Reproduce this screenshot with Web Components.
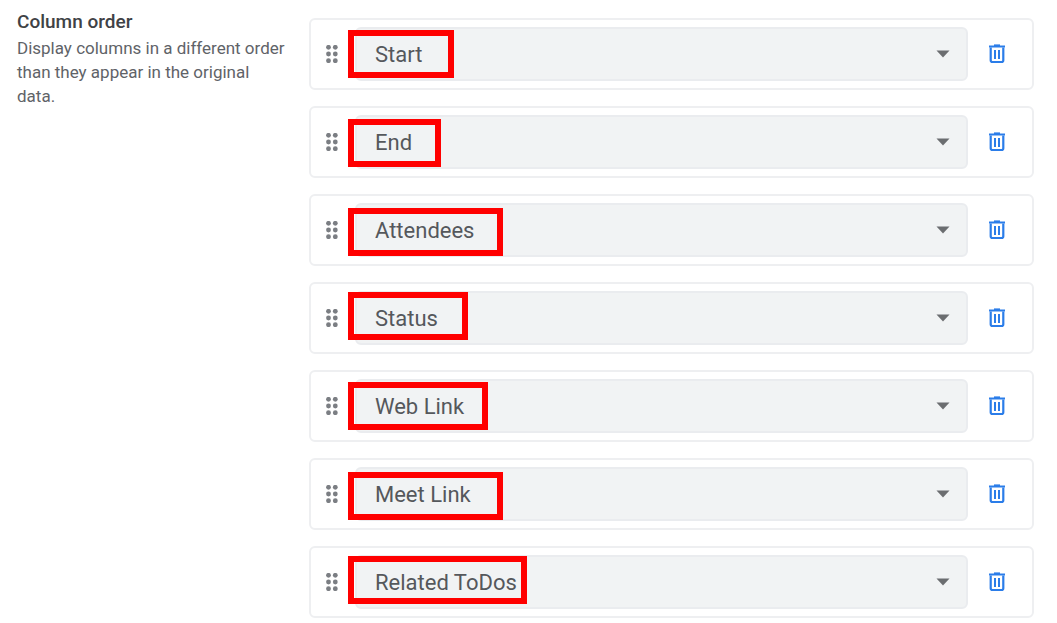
<!DOCTYPE html>
<html lang="en">
<head>
<meta charset="utf-8">
<meta name="viewport" content="width=device-width, initial-scale=1">
<title>Column order</title>
<style>
  body { margin: 0; background: #fff; color: #5f6368; font-family: Roboto, "Liberation Sans", sans-serif; }
</style>
</head>
<body>
<column-order-panel>
  <span slot="title">Column order</span>
  <span slot="description">Display columns in a different order than they appear in the original data.</span>
  <column-row value="Start"></column-row>
  <column-row value="End"></column-row>
  <column-row value="Attendees"></column-row>
  <column-row value="Status"></column-row>
  <column-row value="Web Link"></column-row>
  <column-row value="Meet Link"></column-row>
  <column-row value="Related ToDos"></column-row>
  <highlight-box slot="marks" top="12" width="106"></highlight-box>
  <highlight-box slot="marks" top="101" width="93"></highlight-box>
  <highlight-box slot="marks" top="190" width="155"></highlight-box>
  <highlight-box slot="marks" top="274" width="120"></highlight-box>
  <highlight-box slot="marks" top="364" width="140"></highlight-box>
  <highlight-box slot="marks" top="454" width="155"></highlight-box>
  <highlight-box slot="marks" top="538" width="179"></highlight-box>
</column-order-panel>

<script>
const COLUMNS = ["Start", "End", "Attendees", "Status", "Web Link", "Meet Link", "Related ToDos"];

class ColumnOrderPanel extends HTMLElement {
  constructor() {
    super();
    this.attachShadow({ mode: "open" }).innerHTML = `
      <style>
        :host { display: grid; grid-template-columns: 270px minmax(0, 1fr); column-gap: 22px; padding: 8px 23px 4px 17px; }
        h2 { margin: 0; font-size: 19px; line-height: 28px; font-weight: 500; color: #3f4246; }
        p { margin: 0; font-size: 17px; line-height: 24px; }
        .list { position: relative; display: flex; flex-direction: column; gap: 16px; margin-top: 10px; }
      </style>
      <header><h2><slot name="title"></slot></h2><p><slot name="description"></slot></p></header>
      <div class="list"><slot></slot><slot name="marks"></slot></div>`;
  }
}

class ColumnRow extends HTMLElement {
  constructor() {
    super();
    this.attachShadow({ mode: "open" }).innerHTML = `
      <style>
        :host { display: flex; align-items: center; box-sizing: border-box; height: 72px; padding: 0 23px 0 10px; border: 2px solid #eeeff1; border-radius: 6px; background: #fff; }
        button { display: flex; align-items: center; justify-content: center; border: 0; padding: 0; background: none; cursor: pointer; }
        .drag { width: 22px; height: 40px; margin-right: 12px; cursor: grab; }
        .field { display: grid; flex: 1; min-width: 0; align-items: center; }
        .field > * { grid-area: 1 / 1; }
        select { appearance: none; width: 100%; height: 54px; margin: 0; padding: 2px 48px 0 18px; border: 2px solid #eaecef; border-radius: 6px; background: #f1f3f4; color: #55585c; font-family: inherit; font-size: 22px; line-height: 26px; }
        .arrow { justify-self: end; margin-right: 18px; pointer-events: none; }
        .delete { width: 24px; height: 40px; margin-left: 17px; }
        svg { display: block; }
      </style>
      <button class="drag" type="button" aria-label="Reorder column">
        <svg width="12" height="18" viewBox="0 0 12 18" fill="#7b7e83">
          <circle cx="2.5" cy="2.3" r="2.4"/><circle cx="9.3" cy="2.3" r="2.4"/>
          <circle cx="2.5" cy="9" r="2.4"/><circle cx="9.3" cy="9" r="2.4"/>
          <circle cx="2.5" cy="15.7" r="2.4"/><circle cx="9.3" cy="15.7" r="2.4"/>
        </svg>
      </button>
      <div class="field">
        <select aria-label="Column"></select>
        <svg class="arrow" width="14" height="8" viewBox="0 0 14 8"><path d="M.5.5h13L7 7.5z" fill="#6b6d70"/></svg>
      </div>
      <button class="delete" type="button" aria-label="Delete column">
        <svg width="18" height="20" viewBox="0 0 18 20" fill="none" stroke="#2b7de9">
          <path d="M1 2.500h16" stroke-width="2"/><path d="M6 1.200h6" stroke-width="1.600"/>
          <path d="M2.700 3.500V16.300q0 1.700 1.700 1.700h9.200q1.700 0 1.700-1.700V3.500" stroke-width="2.200"/>
          <path d="M7 6v9M11 6v9" stroke-width="2"/>
        </svg>
      </button>`;
  }
  connectedCallback() {
    const select = this.shadowRoot.querySelector("select");
    const value = this.getAttribute("value");
    select.replaceChildren(...COLUMNS.map(name => new Option(name, name, name === value, name === value)));
  }
}

/* Hand-placed annotation frame drawn over the list. */
class HighlightBox extends HTMLElement {
  constructor() {
    super();
    this.attachShadow({ mode: "open" }).innerHTML = `
      <style>
        :host { position: absolute; left: 39px; box-sizing: border-box; height: 48px; border: 6px solid #f00; pointer-events: none; }
      </style>`;
  }
  connectedCallback() {
    this.style.top = this.getAttribute("top") + "px";
    this.style.width = this.getAttribute("width") + "px";
  }
}

customElements.define("column-order-panel", ColumnOrderPanel);
customElements.define("column-row", ColumnRow);
customElements.define("highlight-box", HighlightBox);
</script>
</body>
</html>
